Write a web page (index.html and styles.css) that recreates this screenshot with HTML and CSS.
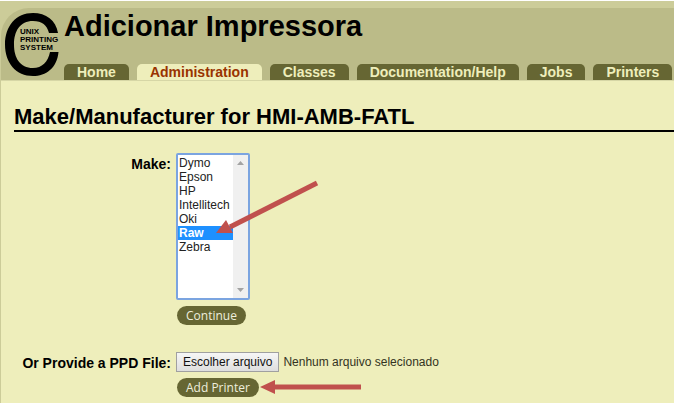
FILE: index.html
```html
<!doctype html>
<html lang="pt-BR">
<head>
<meta charset="utf-8">
<meta name="viewport" content="width=device-width, initial-scale=1">
<title>Adicionar Impressora - CUPS</title>
<link rel="stylesheet" href="styles.css">
</head>

<body>
<div class="page">
<header class="header">
  <svg class="logo" viewBox="0 0 54 64" role="img" aria-label="CUPS">
    <path d="M53 20 C51 7 41 0 28 0 C11 0 0 13 0 31.500 C0 50 11 63 28 63 C41 63 52 55 53.500 39 H45 C43 49 37 55 28 55 C15 55 9 45 9 31.500 C9 18 15 8 28 8 C37 8 42 12 44 20 Z"/>
    <g class="logo-text">
      <text x="15" y="21">UNIX</text>
      <text x="15" y="29">PRINTING</text>
      <text x="15" y="37">SYSTEM</text>
    </g>
  </svg>
  <div class="heading">
    <h1>Adicionar Impressora</h1>
    <nav class="tabs">
      <a href="#home">Home</a>
      <a class="active" href="#admin">Administration</a>
      <a href="#classes">Classes</a>
      <a href="#help">Documentation/Help</a>
      <a href="#jobs">Jobs</a>
      <a href="#printers">Printers</a>
    </nav>
  </div>
</header>

<main class="content">
<h2>Make/Manufacturer for HMI-AMB-FATL</h2>
<form class="fields">
  <label class="name" for="make">Make:</label>
  <div class="control">
    <div class="listbox">
      <select id="make" name="make" size="9">
        <option>Dymo</option>
        <option>Epson</option>
        <option>HP</option>
        <option>Intellitech</option>
        <option>Oki</option>
        <option selected>Raw</option>
        <option>Zebra</option>
      </select>
      <div class="scrollbar">
        <svg width="7" height="4" viewBox="0 0 7 4"><path d="M0 4 L3.500 0 L7 4 Z" fill="#a3a3a3"/></svg>
        <svg width="7" height="4" viewBox="0 0 7 4"><path d="M0 0 L3.500 4 L7 0 Z" fill="#a3a3a3"/></svg>
      </div>
    </div>
    <button class="pill" type="button">Continue</button>
    <svg class="arrow arrow-make" width="104" height="56" viewBox="0 0 104 56">
      <path d="M101 3 L14 47" stroke="#c0504d" stroke-width="5" fill="none"/>
      <path d="M0 53 L10 40 L17 53 Z" fill="#c0504d"/>
    </svg>
  </div>

  <label class="name" for="ppd">Or Provide a PPD File:</label>
  <div class="control">
    <div class="file">
      <input id="ppd" name="ppd" type="file">
      <label class="choose" for="ppd">Escolher arquivo</label>
      <span>Nenhum arquivo selecionado</span>
    </div>
    <button class="pill" type="button">Add Printer</button>
    <svg class="arrow arrow-add" width="101" height="16" viewBox="0 0 101 16">
      <path d="M101 8 L12 8" stroke="#c0504d" stroke-width="5" fill="none"/>
      <path d="M0 8 L15 1 L15 15 Z" fill="#c0504d"/>
    </svg>
  </div>
</form>
</main>
</div>
</body>
</html>
```
FILE: styles.css
```css
* {
  box-sizing: border-box;
}

html, body {
  height: 100%;
  margin: 0;
}

body {
  padding: 1px 2px 0 0;
  background: white;
  color: black;
  font-family: "Liberation Sans", Arial, sans-serif;
  font-size: 14px;
}

.page {
  min-height: 100%;
  padding: 7px 0 0 1px;
  background: #cccc99;
  display: flex;
  flex-direction: column;
}

.header {
  display: flex;
  gap: 5px;
  height: 72px;
  padding-left: 4px;
  background: #bbbb88;
  border-top-left-radius: 28px;
}

.logo {
  width: 54px;
  height: 64px;
  margin-top: 5px;
  flex: none;
}

.logo-text {
  font-size: 8px;
  font-weight: bold;
}

.heading {
  display: flex;
  flex-direction: column;
  justify-content: space-between;
}

h1 {
  margin: 0;
  font-size: 29px;
  line-height: 36px;
}

.tabs {
  display: flex;
  gap: 8px;
}

.tabs a {
  height: 16px;
  padding: 0 13px;
  border-radius: 5px 5px 0 0;
  background: #666633;
  color: #eeeebb;
  font-weight: bold;
  line-height: 16px;
  text-decoration: none;
  white-space: nowrap;
}

.tabs a.active {
  background: #eeeebb;
  color: #993300;
}

.content {
  flex: 1;
  padding: 23px 0 0 13px;
  border-top: 1px solid #d6d6a6;
  background: #eeeebb;
}

h2 {
  margin: 0;
  font-size: 22px;
  line-height: 26px;
  border-bottom: 2px solid black;
}

.fields {
  display: grid;
  grid-template-columns: 157px auto;
  column-gap: 5px;
  row-gap: 27px;
  margin-top: 21px;
}

.name {
  font-weight: bold;
  line-height: 22px;
  text-align: right;
  white-space: nowrap;
}

.control {
  position: relative;
  display: flex;
  flex-direction: column;
  align-items: flex-start;
  gap: 6px;
}

.listbox {
  display: flex;
  width: 74px;
  height: 147px;
  border: 2px solid #7ba4e0;
  border-radius: 2px;
  background: white;
}

.listbox select {
  flex: 1;
  min-width: 0;
  border: 0;
  padding: 1px 0 0;
  outline: none;
  background: white;
  color: #222222;
  font-family: "Liberation Sans", Arial, sans-serif;
  font-size: 12px;
  scrollbar-width: none;
}

.listbox option {
  min-height: 0;
  height: 14px;
  padding: 0 1px;
  line-height: 14px;
}

.listbox option:checked {
  background: #1e90ff linear-gradient(#1e90ff, #1e90ff);
  color: white;
  font-weight: bold;
}

.scrollbar {
  display: flex;
  flex-direction: column;
  align-items: center;
  justify-content: space-between;
  width: 15px;
  padding: 6px 0;
  background: #f0f0f0;
}

.pill {
  height: 19px;
  margin-left: 1px;
  padding: 0 9px;
  border: 0;
  border-radius: 10px;
  background: #666633;
  color: #eeeedd;
  font-family: "Open Sans", "Noto Sans", sans-serif;
  font-size: 12px;
  line-height: 18px;
}

.file {
  display: flex;
  align-items: center;
  gap: 4px;
  font-size: 12px;
  color: #333322;
}

.file input {
  position: absolute;
  width: 1px;
  height: 1px;
  opacity: 0;
}

.choose {
  padding: 0 6px;
  border: 1px solid #a0a0a0;
  background: linear-gradient(#f6f6f6, #dedede);
  color: #111111;
  line-height: 18px;
}

.arrow {
  position: absolute;
  pointer-events: none;
}

.arrow-make {
  left: 40px;
  top: 27px;
}

.arrow-add {
  left: 84px;
  bottom: 2px;
}
```
